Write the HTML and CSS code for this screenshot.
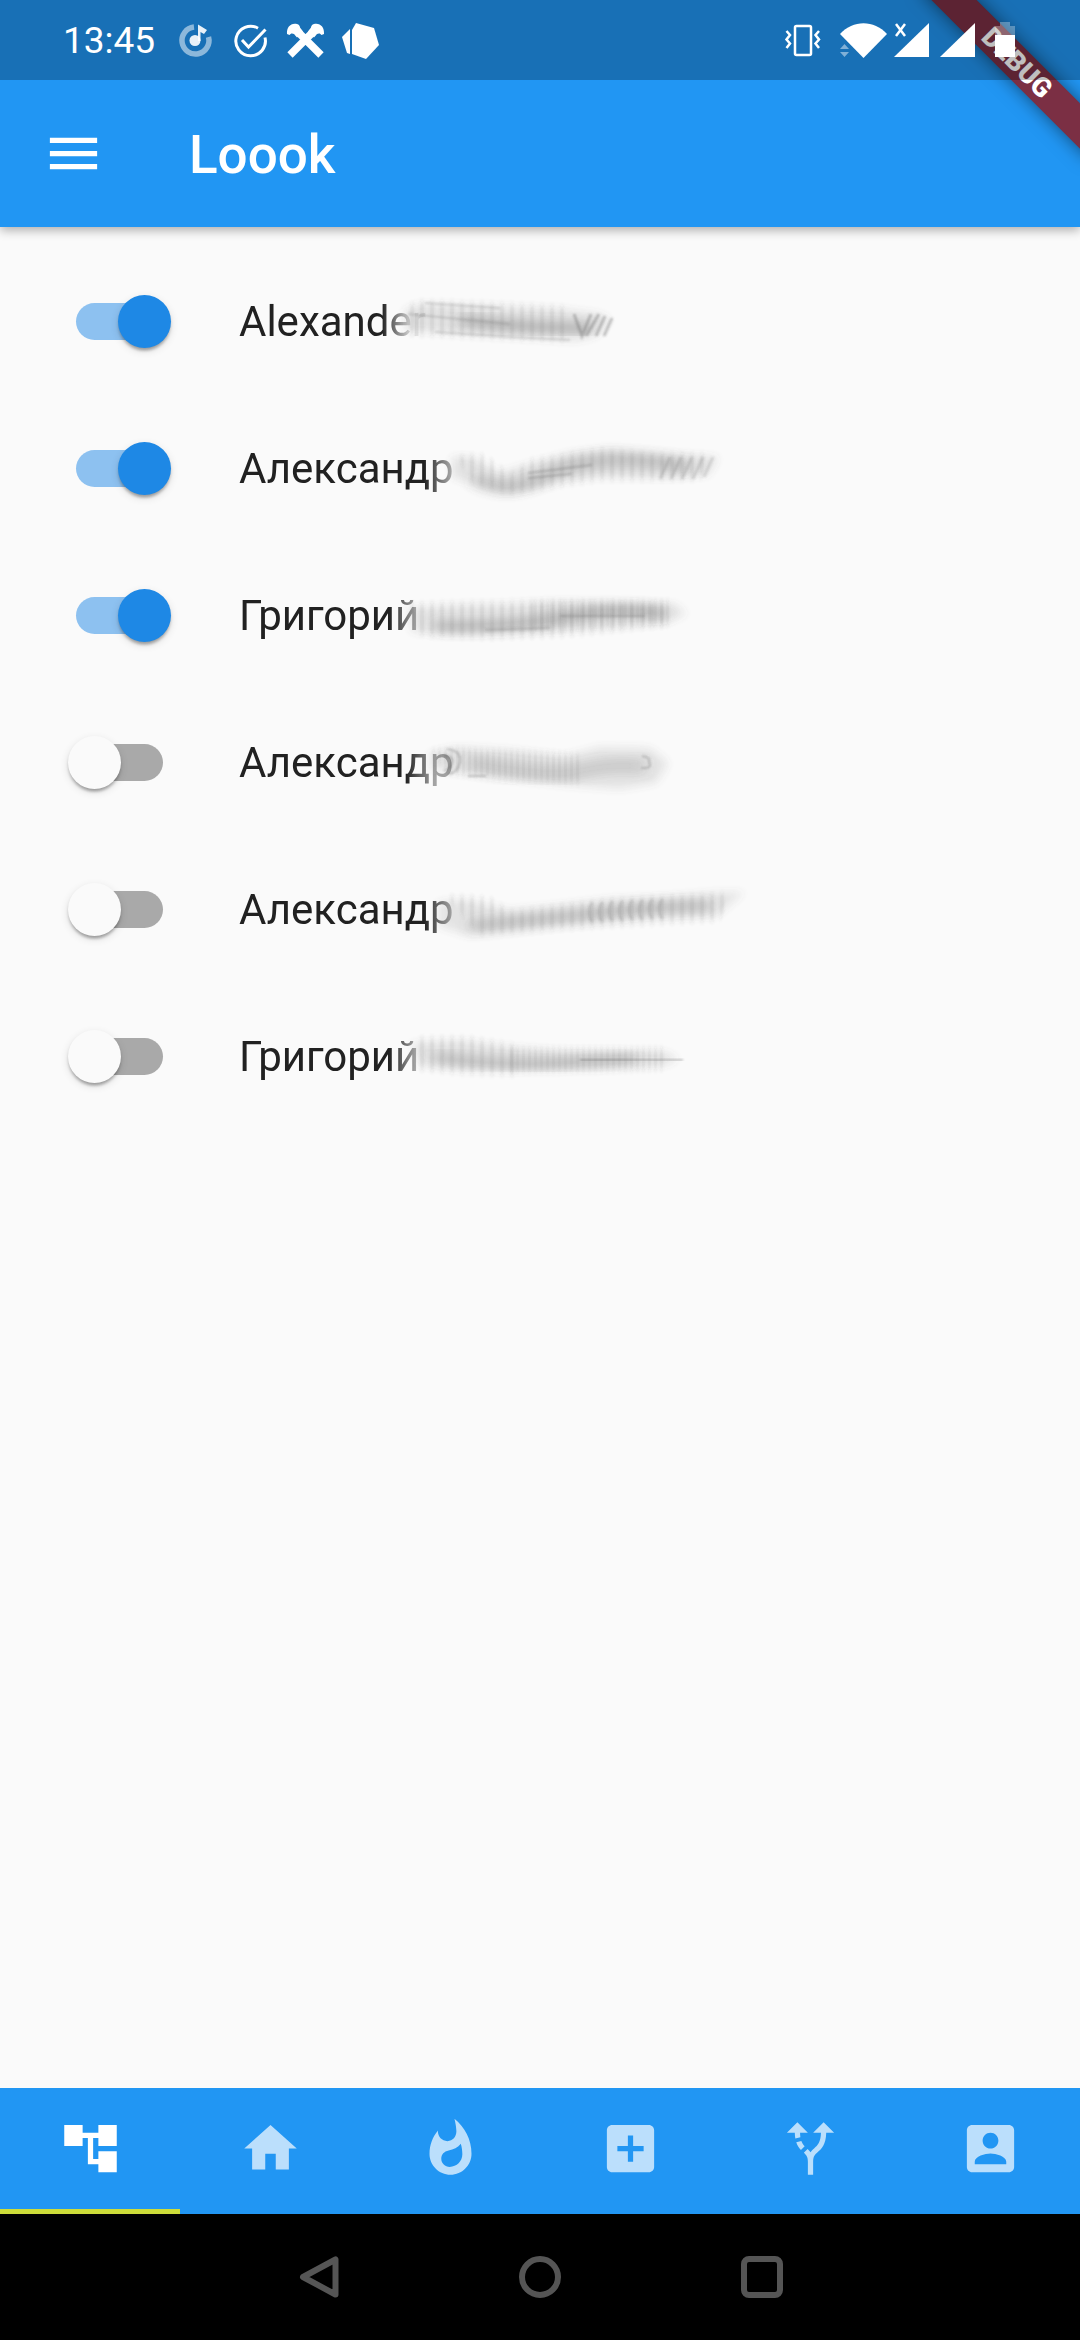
FILE: index.html
```html
<!DOCTYPE html>
<html lang="ru">
<head>
<meta charset="utf-8">
<meta name="viewport" content="width=device-width, initial-scale=1">
<title>Loook</title>
<link rel="stylesheet" href="styles.css">
</head>
<body>
<div class="screen">
  <header class="top">
    <div class="debug-corner"><span class="debug-ribbon">DEBUG</span></div>
    <div class="status">
      <time class="clock">13:45</time>
      <div class="notifications">
        <svg class="note-icon" viewBox="0 0 39 39" aria-hidden="true">
          <path d="M18 6.1A13.500 13.500 0 1 0 32.500 16" fill="none" stroke="#fff" stroke-opacity=".5" stroke-width="5.500"/>
          <circle cx="19" cy="19.500" r="5.500" fill="#fff" fill-opacity=".9"/>
          <path d="M22 3.500l9 5.500-3 4-3.500-2v9h-2.500z" fill="#fff" fill-opacity=".9"/>
        </svg>
        <svg class="note-icon" viewBox="0 0 39 39" aria-hidden="true" fill="none" stroke="#fff" stroke-width="3">
          <path d="M27 7.200A14.800 14.800 0 1 0 34 16.500"/>
          <path d="M11 19l6.500 7L34.500 8.500"/>
        </svg>
        <svg class="note-icon" viewBox="0 0 39 39" aria-hidden="true">
          <path d="M12 12L35 35M27 12L4 35" stroke="#fff" stroke-width="7.500" transform="translate(0 -1)"/>
          <path d="M1 13c-.5-7 4-11.500 10-10 2 .5 3 2 3 3.500l3 4-6 6-3-3.500c-2-1-3.500-.5-4.500 1zM38 13c.5-7-4-11.500-10-10-2 .5-3 2-3 3.500l-3 4 6 6 3-3.500c2-1 3.500-.5 4.500 1z" fill="#fff"/>
        </svg>
        <svg class="note-icon" viewBox="0 0 39 39" aria-hidden="true" fill="#fff">
          <path d="M15 2l18 5 5 17-13 14-14-5V9z"/>
          <path d="M9 8v25L6 32 1 16z"/>
        </svg>
      </div>
      <div class="system">
        <svg class="sys-vibrate" viewBox="0 0 52 40" aria-hidden="true" fill="none" stroke="#fff" stroke-width="2.500">
          <rect x="13" y="6" width="16" height="29" rx="1.500"/>
          <path d="M4.500 11l3.500 4-3.500 4.500 3.500 4-3.500 4.500M37 11l-3.500 4 3.500 4.500-3.500 4 3.500 4.500"/>
        </svg>
        <svg class="sys-wifi" viewBox="0 0 50 40" aria-hidden="true" fill="#fff">
          <path d="M2 14C15-.5 36-.5 49 14L25.500 38z"/>
          <path d="M2 29l4.500-5 4.500 5zM2 32l4.500 5 4.500-5z" fill-opacity=".45"/>
        </svg>
        <svg class="sys-cell" viewBox="0 0 40 40" aria-hidden="true">
          <path d="M37 3v34H2z" fill="#fff"/>
          <path d="M4 4l9 12M13 4L4 16" stroke="#fff" stroke-width="2.500"/>
        </svg>
        <svg class="sys-cell" viewBox="0 0 40 40" aria-hidden="true"><path d="M39 3v34H4z" fill="#fff"/></svg>
        <svg class="sys-cell" viewBox="0 0 40 40" aria-hidden="true" fill="#fff">
          <path d="M15 15V6h5V2h10v4h5v9z" fill-opacity=".3"/>
          <path d="M15 15h20v22H15z"/>
        </svg>
      </div>
    </div>
    <div class="appbar">
      <button class="menu" type="button" aria-label="Menu">
        <svg class="icon" viewBox="0 0 24 24" aria-hidden="true"><path d="M3 18h18v-2H3v2zm0-5h18v-2H3v2zm0-7v2h18V6H3z"/></svg>
      </button>
      <h1 class="title">Loook</h1>
    </div>
  </header>

  <main class="people">
    <svg class="defs" aria-hidden="true">
      <defs>
        <filter id="soft" x="-20%" y="-40%" width="140%" height="180%"><feGaussianBlur stdDeviation="5 4"/></filter>
        <filter id="core" x="-20%" y="-100%" width="140%" height="300%"><feGaussianBlur stdDeviation="7 5"/></filter>
        <filter id="fine" x="-20%" y="-40%" width="140%" height="180%"><feGaussianBlur stdDeviation="1 3"/></filter>
        <filter id="trace" x="-20%" y="-40%" width="140%" height="180%"><feGaussianBlur stdDeviation="1"/></filter>
        <pattern id="ribs" width="10" height="10" patternUnits="userSpaceOnUse"><path d="M0 0h4v10H0z" fill="#444" fill-opacity=".12"/></pattern>
        <pattern id="ribs-tight" width="6" height="10" patternUnits="userSpaceOnUse"><path d="M0 0h3v10H0z" fill="#444" fill-opacity=".12"/></pattern>
      </defs>
    </svg>
    <label class="person"><input class="switch" type="checkbox" role="switch" checked><span class="name name-long">Alexander</span>
      <svg class="smudge" viewBox="0 0 400 147" aria-hidden="true">
        <path filter="url(#soft)" fill="#555" fill-opacity=".17" d="M45 62L60 56 130 58 200 61 240 66 250 72 236 88 215 93 150 89 100 86 45 82z"/>
        <path filter="url(#fine)" fill="url(#ribs)" d="M50 58L60 54 130 56 210 60 210 92 150 90 50 86z"/>
        <path filter="url(#core)" fill="none" stroke="#555" stroke-opacity=".36" stroke-width="12" d="M100 72Q160 80 230 80"/>
        <path filter="url(#trace)" fill="none" stroke="#555" stroke-opacity=".25" stroke-width="2" d="M48 66L150 76M75 84L150 89 210 92M65 55L140 60"/>
        <path filter="url(#trace)" fill="none" stroke="#555" stroke-opacity=".4" stroke-width="3" d="M214 66l8 22 9-22M226 88l13-22M236 88l9-20M244 88l8-18"/>
      </svg></label>
    <label class="person"><input class="switch" type="checkbox" role="switch" checked><span class="name">Александр</span>
      <svg class="smudge" viewBox="0 0 400 147" aria-hidden="true">
        <path filter="url(#soft)" fill="#555" fill-opacity=".17" d="M92 62L112 62 140 78 170 69 210 58 250 53 300 58 358 62 348 80 310 83 240 82 200 87 165 95 145 98 122 92 92 82z"/>
        <path filter="url(#fine)" fill="url(#ribs)" d="M98 62L125 60 150 80 170 66 210 60 240 55 300 60 350 60 340 84 240 84 200 90 150 98 110 86z"/>
        <path filter="url(#core)" fill="none" stroke="#555" stroke-opacity=".26" stroke-width="14" d="M115 84Q150 104 195 76Q250 56 328 72"/>
        <path filter="url(#trace)" fill="none" stroke="#444" stroke-opacity=".3" stroke-width="2" d="M168 83L212 79M168 78L232 70"/>
        <path filter="url(#trace)" fill="none" stroke="#555" stroke-opacity=".22" stroke-width="3" d="M300 84l10-22M311 84l10-22M322 84l10-22M333 84l10-22M344 82l9-20"/>
      </svg></label>
    <label class="person"><input class="switch" type="checkbox" role="switch" checked><span class="name">Григорий</span>
      <svg class="smudge" viewBox="0 0 400 147" aria-hidden="true">
        <path filter="url(#soft)" fill="#555" fill-opacity=".16" d="M48 66L100 63 150 62 200 59 260 60 315 62 326 72 305 81 250 86 200 89 150 91 100 93 52 90z"/>
        <path filter="url(#fine)" fill="url(#ribs)" d="M50 62L200 60 310 62 310 82 200 94 130 96 60 92z"/>
        <path filter="url(#core)" fill="none" stroke="#555" stroke-opacity=".32" stroke-width="12" d="M75 84Q150 86 205 75T305 72"/>
        <path filter="url(#fine)" fill="url(#ribs-tight)" d="M170 60L310 60 310 82 170 90z"/>
        <path filter="url(#trace)" fill="none" stroke="#444" stroke-opacity=".2" stroke-width="3" d="M125 88L190 86M200 74L285 74"/>
      </svg></label>
    <label class="person"><input class="switch" type="checkbox" role="switch"><span class="name name-short">Александр</span>
      <svg class="smudge" viewBox="0 0 400 147" aria-hidden="true">
        <path filter="url(#soft)" fill="#555" fill-opacity=".16" d="M70 64L95 58 150 61 205 67 240 58 290 59 308 74 296 94 260 100 205 96 150 90 100 84 70 80z"/>
        <path filter="url(#fine)" fill="url(#ribs-tight)" d="M70 62L100 60 220 66 220 94 150 90 90 84z"/>
        <path filter="url(#core)" fill="none" stroke="#555" stroke-opacity=".2" stroke-width="16" d="M110 74Q190 90 220 82T285 78"/>
        <path filter="url(#trace)" fill="none" stroke="#555" stroke-opacity=".35" stroke-width="2" d="M87 60q15 2 13 13t-12 12M84 66q10 2 8 8t-8 8M282 67q9 1 7 6 4 7-8 6M108 87h18"/>
      </svg></label>
    <label class="person"><input class="switch" type="checkbox" role="switch"><span class="name">Александр</span>
      <svg class="smudge" viewBox="0 0 400 147" aria-hidden="true">
        <path filter="url(#soft)" fill="#555" fill-opacity=".16" d="M78 66L105 64 150 74 200 69 250 63 300 61 350 57 384 56 356 80 300 83 200 90 150 96 110 100 78 90z"/>
        <path filter="url(#fine)" fill="url(#ribs)" d="M85 60L130 62 150 76 200 70 250 64 370 58 360 84 200 92 120 98z"/>
        <path filter="url(#core)" fill="none" stroke="#555" stroke-opacity=".27" stroke-width="12" d="M110 90Q200 82 250 76T350 70"/>
        <path filter="url(#trace)" fill="none" stroke="#444" stroke-opacity=".16" stroke-width="3" d="M232 66q-6 10 0 20M242 66q-6 10 0 20M252 65q-6 10 0 20M262 65q-6 10 0 20M272 64q-6 10 0 20M282 64q-6 10 0 20M292 63q-6 10 0 20M302 63q-6 10 0 20"/>
        <path filter="url(#trace)" fill="none" stroke="#555" stroke-opacity=".35" stroke-width="4" d="M109 58v20"/>
      </svg></label>
    <label class="person"><input class="switch" type="checkbox" role="switch"><span class="name">Григорий</span>
      <svg class="smudge" viewBox="0 0 400 147" aria-hidden="true">
        <path filter="url(#soft)" fill="#555" fill-opacity=".17" d="M52 60L100 58 150 64 200 68 260 68 305 69 318 76 305 82 240 86 200 87 150 88 100 87 60 82z"/>
        <path filter="url(#fine)" fill="url(#ribs)" d="M55 55L110 55 160 64 160 92 110 90 55 86z"/>
        <path filter="url(#core)" fill="none" stroke="#555" stroke-opacity=".28" stroke-width="11" d="M75 74Q150 84 205 80T275 76"/>
        <path filter="url(#fine)" fill="url(#ribs-tight)" d="M150 66L305 66 305 86 150 88z"/>
        <path filter="url(#trace)" fill="none" stroke="#444" stroke-opacity=".35" stroke-width="2" d="M220 77h102v-1"/>
      </svg></label>
  </main>

  <nav class="tabs" aria-label="Sections">
    <button class="tab tab-active" type="button" aria-label="Tree" aria-current="page"><svg class="icon" viewBox="0 0 24 24" aria-hidden="true"><path d="M22 11V3h-7v3H9V3H2v8h7V8h2v10h4v3h7v-8h-7v3h-2V8h2v3z"/></svg></button>
    <button class="tab" type="button" aria-label="Home"><svg class="icon" viewBox="0 0 24 24" aria-hidden="true"><path d="M10 20v-6h4v6h5v-8h3L12 3 2 12h3v8z"/></svg></button>
    <button class="tab" type="button" aria-label="Hot"><svg class="icon" viewBox="0 0 24 24" aria-hidden="true"><path d="M13.500.67s.74 2.650.74 4.800c0 2.060-1.350 3.730-3.410 3.730-2.070 0-3.630-1.670-3.630-3.730l.03-.36C5.210 7.510 4 10.620 4 14c0 4.420 3.580 8 8 8s8-3.580 8-8C20 8.610 17.410 3.800 13.500.67zM11.710 19c-1.780 0-3.220-1.400-3.220-3.140 0-1.620 1.050-2.760 2.810-3.120 1.770-.36 3.600-1.210 4.620-2.580.39 1.290.59 2.650.59 4.040 0 2.650-2.150 4.800-4.800 4.800z"/></svg></button>
    <button class="tab" type="button" aria-label="Add"><svg class="icon" viewBox="0 0 24 24" aria-hidden="true"><path d="M19 3H5c-1.110 0-2 .9-2 2v14c0 1.100.89 2 2 2h14c1.100 0 2-.9 2-2V5c0-1.100-.9-2-2-2zm-2 10h-4v4h-2v-4H7v-2h4V7h2v4h4v2z"/></svg></button>
    <button class="tab" type="button" aria-label="Routes"><svg class="icon" viewBox="0 0 24 24" aria-hidden="true"><path d="M9.780 11.160l-1.420 1.420c-.68-.69-1.340-1.580-1.790-2.940l1.940-.49c.32.89.77 1.500 1.270 2.010zM11 6L7 2 3 6h3.020c.02.81.08 1.540.19 2.170l1.940-.49C8.080 7.200 8.030 6.630 8.020 6H11zM21 6l-4-4-4 4h2.990c-.1 3.680-1.280 4.750-2.540 5.880-.5.44-1.010.92-1.450 1.550-.34-.49-.73-.88-1.130-1.240L9.460 13.600C10.390 14.450 11 15.140 11 17v5h2v-5c0-2.020.71-2.660 1.790-3.630 1.380-1.240 3.080-2.780 3.200-7.370H21z"/></svg></button>
    <button class="tab" type="button" aria-label="Account"><svg class="icon" viewBox="0 0 24 24" aria-hidden="true"><path d="M3 5v14c0 1.100.89 2 2 2h14c1.100 0 2-.9 2-2V5c0-1.100-.9-2-2-2H5c-1.110 0-2 .9-2 2zm12 4c0 1.660-1.340 3-3 3s-3-1.340-3-3 1.340-3 3-3 3 1.340 3 3zm-9 8c0-2 4-3.100 6-3.100s6 1.100 6 3.100v1H6v-1z"/></svg></button>
  </nav>

  <div class="system-nav">
    <button class="nav-key" type="button" aria-label="Back"><svg class="key-icon" viewBox="0 0 42 42" aria-hidden="true"><path d="M38.500 3.500v35L6 21z" stroke-linejoin="round"/></svg></button>
    <button class="nav-key" type="button" aria-label="Home screen"><svg class="key-icon" viewBox="0 0 42 42" aria-hidden="true"><circle cx="21" cy="21" r="18"/></svg></button>
    <button class="nav-key" type="button" aria-label="Recent apps"><svg class="key-icon" viewBox="0 0 42 42" aria-hidden="true"><rect x="3" y="3" width="36" height="36" rx="5"/></svg></button>
  </div>
</div>
</body>
</html>
```
FILE: styles.css
```css
* { box-sizing: border-box; }

body {
  margin: 0;
  background: #fafafa;
  color: #212121;
  font-family: Roboto, "Noto Sans", sans-serif;
}

button {
  padding: 0;
  border: 0;
  background: none;
  color: inherit;
}

svg { display: block; }

.screen {
  display: flex;
  flex-direction: column;
  min-height: 100vh;
}

/* Header */
.top {
  position: relative;
  background: #2196f3;
  color: #fff;
  box-shadow: 0 3px 10px rgba(0, 0, 0, .32);
}

.status {
  position: relative;
  display: flex;
  align-items: center;
  height: 80px;
  padding: 0 60px 0 63px;
  background: rgba(0, 0, 0, .25);
}

.clock {
  padding-top: 2px;
  font-size: 37px;
  line-height: 44px;
}

.notifications {
  display: flex;
  gap: 16px;
  margin-left: 21px;
}

.note-icon {
  width: 39px;
  height: 39px;
}

.system {
  display: flex;
  gap: 4px;
  margin-left: auto;
}

.sys-vibrate { width: 52px; height: 40px; }
.sys-wifi { width: 50px; height: 40px; }
.sys-cell { width: 40px; height: 40px; }

.appbar {
  display: flex;
  align-items: center;
  gap: 84px;
  height: 147px;
  padding: 0 42px;
}

.icon {
  width: 63px;
  height: 63px;
  fill: currentColor;
}

.title {
  margin: 0;
  padding-top: 3px;
  font-size: 53px;
  font-weight: 500;
  line-height: 60px;
}

/* Corner ribbon, under the status bar tint */
.debug-corner {
  position: absolute;
  top: 0;
  right: 0;
  width: 200px;
  height: 200px;
  overflow: hidden;
}

.debug-ribbon {
  position: absolute;
  top: 47px;
  right: -57px;
  width: 240px;
  background: #7b2f44;
  box-shadow: 0 0 18px rgba(0, 0, 0, .5);
  font-size: 27px;
  font-weight: 900;
  line-height: 32px;
  text-align: center;
  transform: rotate(45deg);
}

/* People list */
.people {
  flex: 1;
  padding: 21px 0;
}

.defs {
  position: absolute;
  width: 0;
  height: 0;
}

.person {
  position: relative;
  display: flex;
  align-items: center;
  gap: 68px;
  height: 147px;
  padding: 0 68px;
  font-size: 42px;
  line-height: 50px;
}

.name {
  mask-image: linear-gradient(to left, rgba(0, 0, 0, .3), #000 30px);
}

.name-long {
  mask-image: linear-gradient(to left, rgba(0, 0, 0, .1) 14px, #000 44px);
}

.name-short {
  mask-image: linear-gradient(to left, rgba(0, 0, 0, .4) 20px, #000 48px);
}

.smudge {
  position: absolute;
  top: 0;
  left: 360px;
  width: 400px;
  height: 147px;
  opacity: .85;
}

.switch {
  appearance: none;
  display: grid;
  align-items: center;
  width: 103px;
  height: 53px;
  margin: 0;
}

.switch::before,
.switch::after {
  content: "";
  grid-area: 1 / 1;
}

.switch::before {
  height: 37px;
  margin: 0 8px;
  border-radius: 19px;
  background: #a9a9a9;
}

.switch::after {
  width: 53px;
  height: 53px;
  border-radius: 50%;
  background: #fafafa;
  box-shadow: 0 4px 3px -2px rgba(0, 0, 0, .2), 0 3px 3px rgba(0, 0, 0, .14), 0 3px 8px rgba(0, 0, 0, .12);
}

.switch:checked::before { background: #8dc1f0; }

.switch:checked::after {
  justify-self: end;
  background: #1e88e5;
}

/* Bottom tabs */
.tabs {
  display: grid;
  grid-template-columns: repeat(6, 1fr);
  height: 126px;
  background: #2196f3;
}

.tab {
  display: grid;
  place-items: center;
  border-bottom: 5px solid transparent;
  color: #bbdffc;
}

.tab-active {
  border-color: #cddc39;
  color: #fff;
}

/* System navigation */
.system-nav {
  display: flex;
  justify-content: center;
  height: 126px;
  background: #000;
}

.nav-key {
  display: grid;
  place-items: center;
  width: 222px;
}

.key-icon {
  width: 42px;
  height: 42px;
  fill: none;
  stroke: #555;
  stroke-width: 6px;
}
```
